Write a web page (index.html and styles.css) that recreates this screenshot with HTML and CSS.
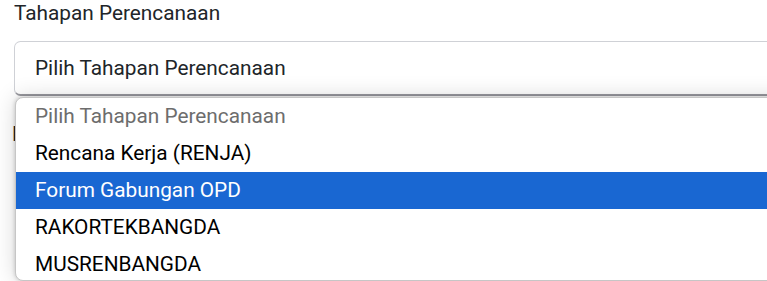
FILE: index.html
```html
<!DOCTYPE html>
<html lang="en">
<head>
    <meta charset="UTF-8">
    <meta name="viewport" content="width=device-width, initial-scale=1.0">
    <title>Tahapan Perencanaan</title>
    <link rel="stylesheet" href="styles.css">
</head>
<body>
    <div class="form-group">
        <label class="form-label">Tahapan Perencanaan</label>
        <div class="select-wrap">
            <div class="form-select">Pilih Tahapan Perencanaan</div>
            <ul class="select-popup">
                <li class="placeholder">Pilih Tahapan Perencanaan</li>
                <li>Rencana Kerja (RENJA)</li>
                <li class="active">Forum Gabungan OPD</li>
                <li>RAKORTEKBANGDA</li>
                <li>MUSRENBANGDA</li>
            </ul>
        </div>
    </div>

    <div class="form-group next">
        <label class="form-label">Dokumen Perencanaan</label>
    </div>
</body>
</html>
```

FILE: styles.css
```css
html, body { margin: 0; height: 100%; overflow: hidden; }
body { font-family: Roboto, "Noto Sans", Arial, sans-serif; font-size: 20.8px; color: #212529; background: #fff; padding: 0 0 0 14px; }
.form-group { width: 820px; }
.form-label { display: block; line-height: 27px; margin-bottom: 14px; }
.select-wrap { position: relative; }
.form-select { box-sizing: border-box; height: 55px; line-height: 52px; padding: 0 20px; border: 1px solid #cfd1d6; border-bottom: 2px solid #9a9aa0; border-radius: 6.5px; background: #fff; }
.select-popup { position: absolute; z-index: 2; top: 56px; left: 1px; right: 0; height: 182px; margin: 0; padding: 0; list-style: none; overflow: hidden; background: #fff; border: 1px solid #c6c6c6; border-radius: 8px; box-shadow: 0 0 22px rgba(0, 0, 0, 0.16), 0 0 4px rgba(0, 0, 0, 0.2); }
.select-popup li { height: 37px; line-height: 37px; padding-left: 19px; color: #000; white-space: nowrap; }
.select-popup li.placeholder { color: #6d6d6d; }
.select-popup li.active { background: #1967d2; color: #fff; }
.next { margin-top: 25px; margin-left: -2px; }
.next .form-label { color: #212529; }
```
